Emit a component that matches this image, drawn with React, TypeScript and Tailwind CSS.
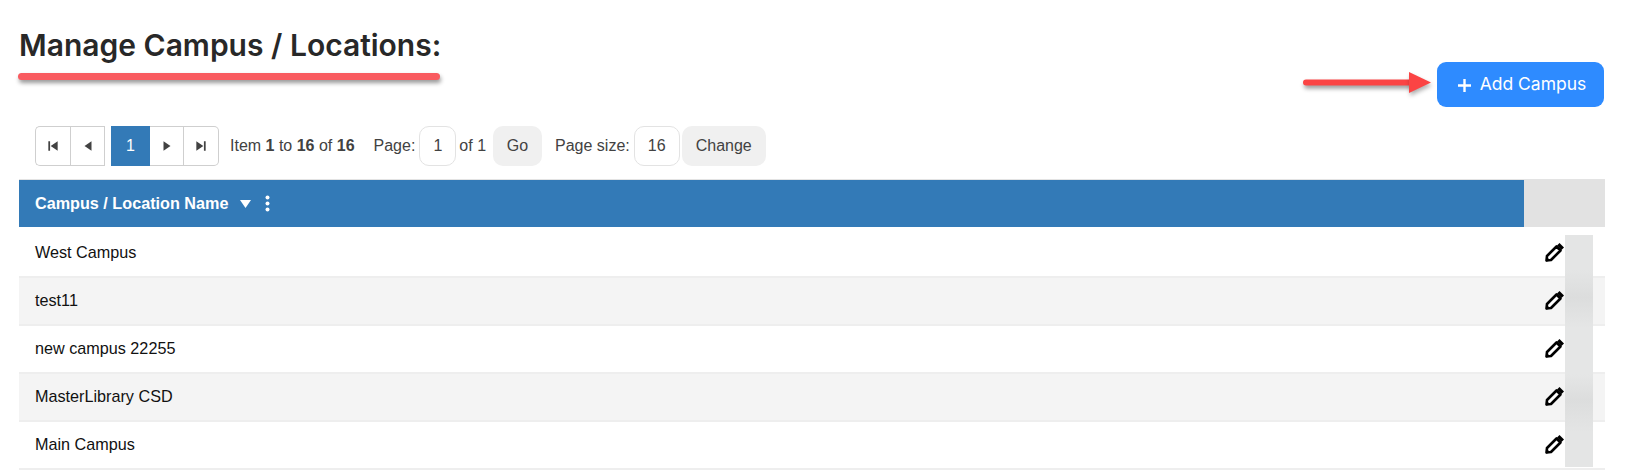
const campuses = ["West Campus", "test11", "new campus 22255", "MasterLibrary CSD", "Main Campus"];

const PagerIcon = ({ d }: { d: string }) => (
  <svg width="14" height="14" viewBox="0 0 12 12" fill="#424242">
    <path d={d} />
  </svg>
);

const PagerButton = ({ d, className }: { d: string; className: string }) => (
  <div className={`h-[40px] flex items-center justify-center border-[#cfcfcf] border-y ${className}`}>
    <PagerIcon d={d} />
  </div>
);

const EditIcon = () => (
  <svg width="20" height="20" viewBox="0 0 20 20" className="mb-[1px]">
    <path d="M14.5 1L19 5.5L16.5 8L12 3.5Z" fill="#000" />
    <path d="M11.5 4.5L15.5 8.5L6 18L1.5 18.5L2 14Z" fill="#fff" stroke="#000" strokeWidth="2.6" strokeLinejoin="round" />
    <path d="M1 19.5L1.4 14.5L5.5 18.6Z" fill="#000" />
  </svg>
);

export default function App() {
  return (
    <div className="relative w-[1626px] h-[471px] overflow-hidden bg-white pl-[19px] pr-[21px] font-['Liberation_Sans',sans-serif]">
      <div className="h-[126px] relative">
        <h1 className="pt-[25px] text-[30px] leading-[40px] font-semibold text-[#282828] font-['Inter',sans-serif]">
          Manage Campus / Locations:
        </h1>
        <div className="absolute left-[-1px] top-[73px] w-[422px] h-[7px] rounded-full bg-[#f95b60] shadow-[1px_3px_4px_rgba(0,0,0,0.4)]" />
        <svg className="absolute left-[1280px] top-[68px]" width="140" height="34" viewBox="0 0 140 34" fill="none">
          <path d="M7 14.5H112" stroke="#fb4444" strokeWidth="6" strokeLinecap="round" className="drop-shadow-[1px_3px_2px_rgba(0,0,0,0.4)]" />
          <path d="M110 4L132 14.5L110 25Z" fill="#fb4444" className="drop-shadow-[1px_3px_2px_rgba(0,0,0,0.3)]" />
        </svg>
        <button className="absolute right-[1px] top-[62px] w-[167px] h-[45px] rounded-[9px] bg-[#2e8bff] text-white flex items-center justify-center gap-[8px] pl-[2px] text-[17.5px] font-['Inter',sans-serif]">
          <svg width="15" height="15" viewBox="0 0 15 15" className="mt-[2px]">
            <path d="M7.5 1V14M1 7.5H14" stroke="#fff" strokeWidth="2.4" />
          </svg>
          Add Campus
        </button>
      </div>

      <div className="h-[53px] flex items-start pl-[16px] text-[16px] text-[#424242]">
        <div className="flex">
          <PagerButton d="M2 2H3.5V10H2ZM10 2V10L4 6Z" className="w-[35px] border-l rounded-l-[5px]" />
          <PagerButton d="M9 2V10L3 6Z" className="w-[35px] border-x" />
          <div className="w-[39px] h-[40px] ml-[6px] bg-[#337ab7] text-white flex items-center justify-center">1</div>
          <PagerButton d="M3 2V10L9 6Z" className="w-[34px] border-r" />
          <PagerButton d="M2 2V10L8 6ZM8.5 2H10V10H8.5Z" className="w-[35px] border-r rounded-r-[5px]" />
        </div>
        <div className="h-[40px] flex items-center ml-[11px]">
          <span>Item <b>1</b> to <b>16</b> of <b>16</b></span>
          <span className="ml-[19px]">Page:</span>
          <div className="w-[37px] h-[40px] ml-[4px] rounded-[10px] border border-[#e3e3e3] flex items-center justify-center">1</div>
          <span className="ml-[3px]">of 1</span>
          <div className="w-[49px] h-[40px] ml-[7px] rounded-[10px] bg-[#f0f0f0] flex items-center justify-center">Go</div>
          <span className="ml-[13px]">Page size:</span>
          <div className="w-[46px] h-[40px] ml-[4px] rounded-[10px] border border-[#e3e3e3] flex items-center justify-center">16</div>
          <div className="w-[84px] h-[40px] ml-[2px] rounded-[10px] bg-[#f0f0f0] flex items-center justify-center">Change</div>
        </div>
      </div>

      <div className="relative">
        <div className="flex h-[48px] mb-[3px] border-t border-[#e3e3e3]">
          <div className="w-[1505px] bg-[#337ab7] flex items-center pl-[16px] text-white text-[16.2px] font-bold">
            Campus / Location Name
            <svg className="ml-[12px]" width="11" height="8" viewBox="0 0 11 8" fill="#fff">
              <path d="M0 0H11L5.5 8Z" />
            </svg>
            <svg className="ml-[14px]" width="5" height="17" viewBox="0 0 5 17" fill="#fff">
              <circle cx="2.5" cy="2.5" r="2" />
              <circle cx="2.5" cy="8.5" r="2" />
              <circle cx="2.5" cy="14.5" r="2" />
            </svg>
          </div>
          <div className="flex-1 bg-[#e2e2e2]" />
        </div>
        {campuses.map((name, i) => (
          <div
            key={name}
            className={`h-[48px] flex items-center justify-between pb-[2px] pl-[16px] pr-[40px] text-[16.2px] text-[#111] border-b-2 border-[#eeeeee] ${i % 2 ? "bg-[#f4f4f4]" : "bg-white"}`}
          >
            {name}
            <EditIcon />
          </div>
        ))}
        <div className="absolute right-[12px] top-[56px] w-[28px] h-[232px] bg-[linear-gradient(180deg,#e4e5e5_15%,#dcdddd_27%,#e5e6e6_40%,#e5e6e6_60%,#dcdddd_71%,#e4e5e5_85%)]" />
      </div>
    </div>
  );
}
